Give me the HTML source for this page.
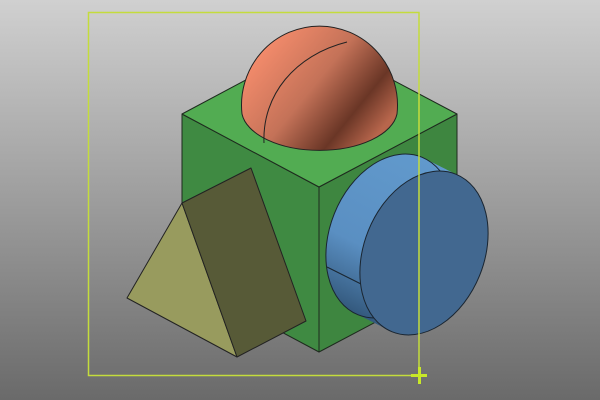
<!DOCTYPE html>
<html><head><style>
html,body{margin:0;padding:0;width:600px;height:400px;overflow:hidden}
body{background:linear-gradient(#d0d0d0,#6a6a6a)}
svg{display:block}
</style></head><body>
<svg width="600" height="400" viewBox="0 0 600 400" xmlns="http://www.w3.org/2000/svg">
<defs>
<linearGradient id="sph" x1="0.1" y1="0.2" x2="0.95" y2="0.75">
<stop offset="0" stop-color="#f58c6c"/>
<stop offset="0.45" stop-color="#c47258"/>
<stop offset="0.78" stop-color="#6a3626"/>
<stop offset="1" stop-color="#b8664c"/>
</linearGradient>
<linearGradient id="cyl" x1="0" y1="0" x2="0" y2="1">
<stop offset="0" stop-color="#6199cc"/>
<stop offset="0.6" stop-color="#5a8fc2"/>
<stop offset="1" stop-color="#33587c"/>
</linearGradient>
</defs>
<g stroke="#1e2a1e" stroke-width="1" stroke-linejoin="round">
<polygon points="182,114 319,187 319,352 182,279" fill="#3f8a42"/>
<polygon points="319,187 457,114 457,279 319,352" fill="#3e8640"/>
<polygon points="182,114 319,41 457,114 319,187" fill="#52ac52"/>
</g>
<path d="M242,114 A78,79 0 1 1 397,114 A78,41 0 0 1 242,114 Z" fill="url(#sph)" stroke="#222" stroke-width="1"/>
<path d="M264,143 C262,95 295,55 347,42" fill="none" stroke="#222" stroke-width="1"/>
<g fill="url(#cyl)">
<ellipse cx="390" cy="236" rx="60" ry="85" transform="rotate(22 390 236)"/>
<ellipse cx="396" cy="239" rx="60" ry="85" transform="rotate(22 396 239)"/>
<ellipse cx="402" cy="242" rx="60" ry="85" transform="rotate(22 402 242)"/>
<ellipse cx="408" cy="245" rx="60" ry="85" transform="rotate(22 408 245)"/>
<ellipse cx="414" cy="248" rx="60" ry="85" transform="rotate(22 414 248)"/>
<ellipse cx="420" cy="251" rx="60" ry="85" transform="rotate(22 420 251)"/>
</g>
<ellipse cx="390" cy="236" rx="60" ry="85" transform="rotate(22 390 236)" fill="none" stroke="#1a2530" stroke-width="1"/>
<line x1="327" y1="267" x2="361" y2="284" stroke="#1a2530" stroke-width="1"/>
<ellipse cx="424" cy="253" rx="60" ry="85" transform="rotate(22 424 253)" fill="#426890" stroke="#1a2530" stroke-width="1"/>
<g stroke="#222" stroke-width="1" stroke-linejoin="round">
<polygon points="127,298 182,203 237,357" fill="#989b5e"/>
<polygon points="182,203 251,168 306,321 237,357" fill="#575a37"/>
</g>
<rect x="88.5" y="12.5" width="330.5" height="363" fill="none" stroke="#c4dc3c" stroke-width="1.5"/>
<rect x="411" y="374" width="16" height="3" fill="#c8e828"/>
<rect x="418" y="367" width="3" height="17" fill="#c8e828"/>
</svg>
</body></html>
